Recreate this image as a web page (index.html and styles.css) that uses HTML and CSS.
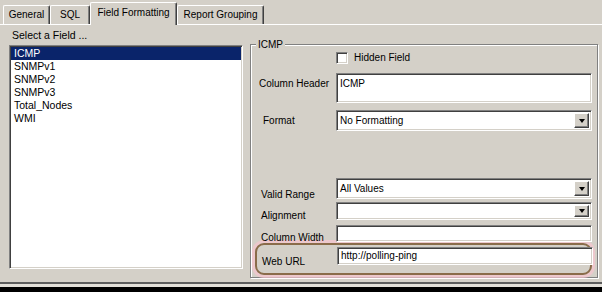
FILE: index.html
```html
<!DOCTYPE html>
<html lang="en">

<head>
    <meta charset="UTF-8">
    <title>Field Formatting</title>
    <link rel="stylesheet" href="styles.css">
</head>

<body>
    <div class="tabs">
        <div class="tab tab-general">General</div>
        <div class="tab tab-sql">SQL</div>
        <div class="tab tab-active">Field Formatting</div>
        <div class="tab tab-report">Report Grouping</div>
    </div>
    <div class="panel">
        <div class="fields">
            <div class="caption">Select a Field ...</div>
            <ul class="list">
                <li class="sel">ICMP</li>
                <li>SNMPv1</li>
                <li>SNMPv2</li>
                <li>SNMPv3</li>
                <li>Total_Nodes</li>
                <li>WMI</li>
            </ul>
        </div>
        <div class="group">
            <div class="legend">ICMP</div>
            <div class="check-row">
                <span class="check"></span>
                <span>Hidden Field</span>
            </div>
            <div class="row row-header">
                <label class="lbl-top">Column Header</label>
                <div class="box tall">ICMP</div>
            </div>
            <div class="row row-format">
                <label class="lbl-in">Format</label>
                <div class="box combo"><span>No Formatting</span><span class="btn"><i></i></span></div>
            </div>
            <div class="row row-range">
                <label class="lbl-low">Valid Range</label>
                <div class="box combo"><span>All Values</span><span class="btn"><i></i></span></div>
            </div>
            <div class="row row-align">
                <label class="lbl-low">Alignment</label>
                <div class="box combo"><span></span><span class="btn"><i></i></span></div>
            </div>
            <div class="row row-width">
                <label class="lbl-low">Column Width</label>
                <div class="box"></div>
            </div>
            <div class="row row-url">
                <label>Web URL</label>
                <div class="box">http://polling-ping</div>
            </div>
        </div>
    </div>
    <div class="edge"></div>
    <div class="base"></div>
</body>

</html>
```

FILE: styles.css
```css
* {
    padding: 0;
    margin: 0;
    box-sizing: border-box;
}

html,
body {
    width: 602px;
    height: 292px;
    overflow: hidden;
}

body {
    background: #d4d0c8;
    font-family: "Liberation Sans", Arial, sans-serif;
    font-size: 10px;
    color: #000;
}

/* tab strip */
.tabs {
    display: flex;
    align-items: flex-end;
    height: 25px;
    padding-left: 3px;
    border-bottom: 1px solid #fff;
}

.tab {
    height: 19px;
    line-height: 18px;
    text-align: center;
    border: 1px solid;
    border-color: #fff #404040 transparent #fff;
    border-bottom: none;
    border-radius: 2px 2px 0 0;
    box-shadow: inset -1px 0 #808080;
}

.tab-general {
    width: 47px;
}

.tab-sql {
    width: 40px;
}

.tab-active {
    width: 87px;
    height: 23px;
    line-height: 20px;
    margin-bottom: -1px;
    background: #d4d0c8;
}

.tab-report {
    width: 87px;
}

/* page body */
.panel {
    display: flex;
    height: 259px;
    border-bottom: 2px solid #5c5c5c;
}

.edge {
    height: 3px;
    background: #e2dfd8;
}

.base {
    height: 5px;
    background: #000;
}

.fields {
    width: 234px;
    margin-left: 9px;
}

.caption {
    height: 20px;
    padding: 4px 0 0 3px;
    line-height: 13px;
    font-size: 10.5px;
}

.list {
    list-style: none;
    height: 224px;
    background: #fff;
    border: 1px solid;
    border-color: #808080 #fff #fff #808080;
    box-shadow: inset 1px 1px #404040, inset -1px -1px #d4d0c8;
    padding: 1px;
    font-size: 10.5px;
}

.list li {
    height: 13px;
    line-height: 13px;
    padding-left: 3px;
}

.list .sel {
    background: #0a246a;
    color: #fff;
}

/* group box */
.group {
    width: 348px;
    height: 234px;
    margin: 19px 0 0 7px;
    border: 1px solid #808080;
    box-shadow: inset 1px 1px #fff, 1px 1px #fff;
}

.legend {
    width: fit-content;
    height: 13px;
    line-height: 13px;
    margin: -7px 0 0 5px;
    padding: 0 2px;
    background: #d4d0c8;
}

.check-row {
    display: flex;
    align-items: center;
    gap: 6px;
    height: 13px;
    padding-left: 85px;
}

.check {
    width: 12px;
    height: 12px;
    background: #fff;
    border: 1px solid;
    border-color: #808080 #fff #fff #808080;
    box-shadow: inset 1px 1px #404040, inset -1px -1px #d4d0c8;
}

.row {
    display: grid;
    grid-template-columns: 78px 256px;
    margin-left: 7px;
}

.row label {
    padding-left: 3px;
    line-height: 13px;
    align-self: center;
}

.row .lbl-top {
    align-self: start;
    padding: 4px 0 0 1px;
}

.row .lbl-in {
    padding-left: 5px;
}

.row .lbl-low {
    align-self: end;
    margin-bottom: -2px;
}

.box {
    background: #fff;
    border: 1px solid;
    border-color: #808080 #fff #fff #808080;
    box-shadow: inset 1px 1px #404040, inset -1px -1px #d4d0c8;
    padding: 0 2px 0 3px;
    line-height: 15px;
    white-space: nowrap;
}

.tall {
    padding-top: 2px;
}

.combo {
    display: flex;
    justify-content: space-between;
    align-items: center;
    padding: 2px 2px 2px 3px;
}

.btn {
    display: flex;
    justify-content: center;
    align-items: center;
    width: 15px;
    height: 100%;
    background: #d4d0c8;
    border: 1px solid;
    border-color: #fff #404040 #404040 #fff;
    box-shadow: inset -1px -1px #808080;
}

.btn i {
    width: 0;
    height: 0;
    border-style: solid;
    border-width: 4px 3.5px 0;
    border-color: #000 transparent transparent;
}

.row-header {
    height: 30px;
    margin-top: 9px;
}

.row-format {
    height: 17px;
    margin-top: 7px;
}

.row-range {
    height: 19px;
    margin-top: 51px;
}

.row-align {
    height: 18px;
    margin-top: 5px;
}

.row-width {
    height: 17px;
    margin-top: 5px;
}

/* highlighted web url row */
.row.row-url {
    grid-template-columns: 75px 1fr;
    height: 32px;
    margin: 1px 5px 0 4px;
    padding: 2px 0 8px 5px;
    border: 2px solid #8a6c4a;
    border-radius: 9px;
    box-shadow: 0 0 0 3px rgba(248, 196, 206, 0.7);
}

.row-url label {
    padding-left: 0;
    align-self: end;
    margin-bottom: -3px;
}

.row-url .box {
    margin-right: -3px;
    line-height: 16px;
}
```
